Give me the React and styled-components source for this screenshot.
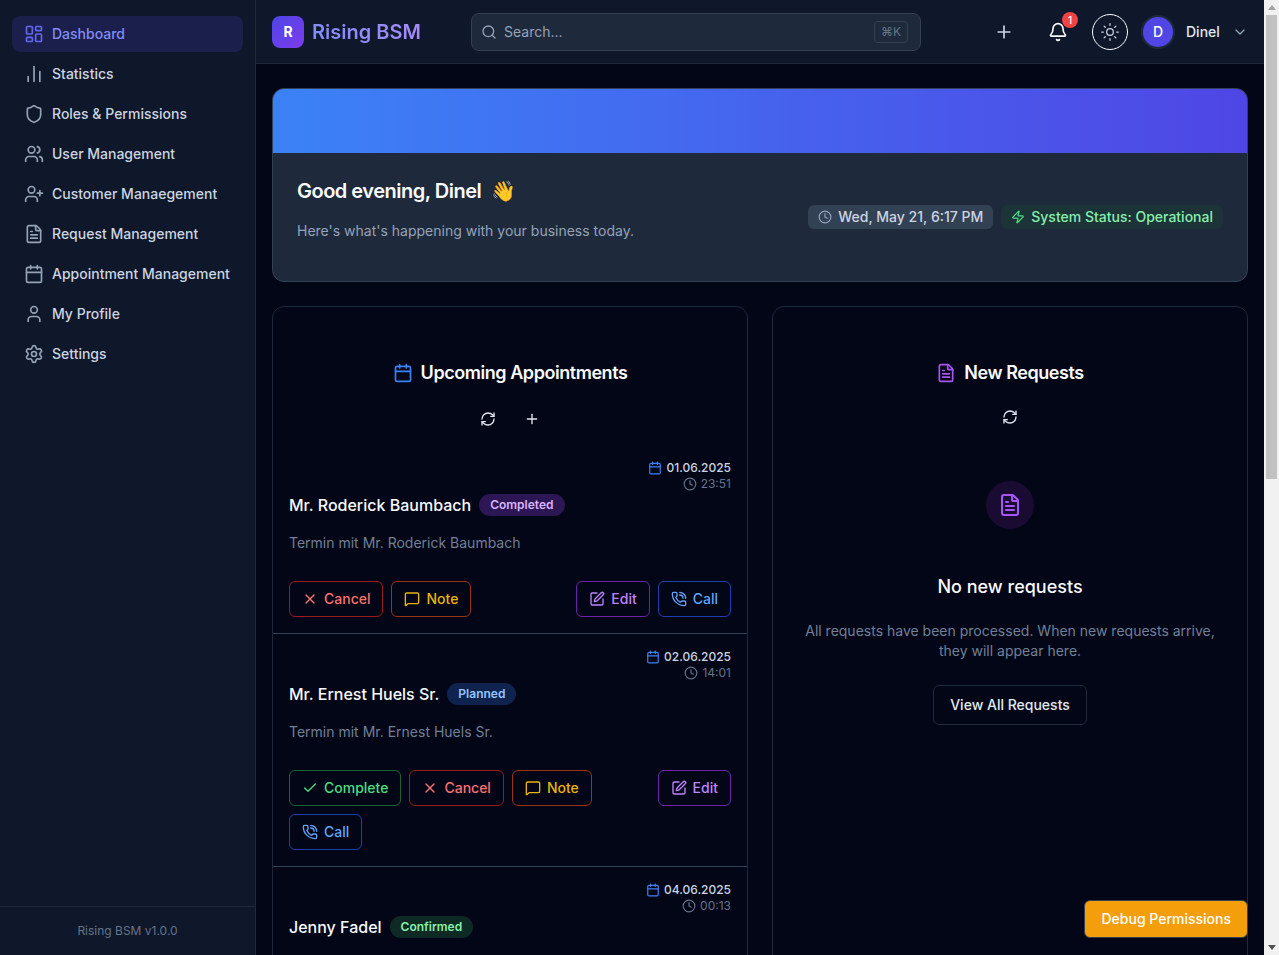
import React from "react";
import styled, { createGlobalStyle } from "styled-components";
import {
  Bell,
  Calendar,
  ChartNoAxesColumn,
  Check,
  ChevronDown,
  Clock,
  FileText,
  LayoutDashboard,
  MessageSquare,
  PhoneCall,
  Plus,
  RefreshCw,
  Search,
  Settings,
  Shield,
  SquarePen,
  Sun,
  User,
  UserPlus,
  Users,
  X,
  Zap,
} from "lucide-react";

const GlobalStyle = createGlobalStyle`
  * { box-sizing: border-box; }
  body {
    margin: 0;
    overflow: hidden;
    background: #020617;
    color: #f8fafc;
    font-family: Inter, "Liberation Sans", sans-serif;
    line-height: 20px;
    -webkit-font-smoothing: antialiased;
  }
`;

const NAV_ITEMS = [
  { label: "Dashboard", icon: LayoutDashboard, active: true },
  { label: "Statistics", icon: ChartNoAxesColumn },
  { label: "Roles & Permissions", icon: Shield },
  { label: "User Management", icon: Users },
  { label: "Customer Manaegement", icon: UserPlus },
  { label: "Request Management", icon: FileText },
  { label: "Appointment Management", icon: Calendar },
  { label: "My Profile", icon: User },
  { label: "Settings", icon: Settings },
];

const ACTIONS = {
  complete: { label: "Complete", icon: Check, color: "#4ade80", border: "#166534" },
  cancel: { label: "Cancel", icon: X, color: "#f87171", border: "#991b1b" },
  note: { label: "Note", icon: MessageSquare, color: "#eab308", border: "#9a3412" },
  edit: { label: "Edit", icon: SquarePen, color: "#c084fc", border: "#6b21a8", push: true },
  call: { label: "Call", icon: PhoneCall, color: "#60a5fa", border: "#1e40af" },
};

const APPOINTMENTS = [
  {
    name: "Mr. Roderick Baumbach",
    status: "Completed",
    date: "01.06.2025",
    time: "23:51",
    actions: ["cancel", "note", "edit", "call"],
  },
  {
    name: "Mr. Ernest Huels Sr.",
    status: "Planned",
    date: "02.06.2025",
    time: "14:01",
    actions: ["complete", "cancel", "note", "edit", "call"],
  },
  {
    name: "Jenny Fadel",
    status: "Confirmed",
    date: "04.06.2025",
    time: "00:13",
    actions: ["complete", "cancel", "note", "edit", "call"],
  },
];

const STATUS_COLORS = {
  Completed: { bg: "#2c1653", fg: "#d8b4fe" },
  Planned: { bg: "#10234f", fg: "#93c5fd" },
  Confirmed: { bg: "#0f2a25", fg: "#86efac" },
};

const App = () => {
  return (
    <>
      <GlobalStyle />
      <Viewport>
        <Scroller>
          <Shell>
            <Sidebar>
              <Nav>
                {NAV_ITEMS.map(({ label, icon: Icon, active }) => (
                  <NavItem key={label} $active={active}>
                    <NavIcon $active={active}>
                      <Icon size={20} />
                    </NavIcon>
                    {label}
                  </NavItem>
                ))}
              </Nav>
              <SidebarFooter>Rising BSM v1.0.0</SidebarFooter>
            </Sidebar>

            <Column>
              <Header>
                <Brand>
                  <LogoMark>R</LogoMark>
                  <BrandName>Rising BSM</BrandName>
                </Brand>
                <SearchBox>
                  <Search size={16} color="#94a3b8" />
                  <SearchText>Search...</SearchText>
                  <Kbd>⌘K</Kbd>
                </SearchBox>
                <HeaderTools>
                  <PlainIcon>
                    <Plus size={20} color="#cbd5e1" />
                  </PlainIcon>
                  <BellWrap>
                    <Bell size={20} color="#f8fafc" />
                    <BellBadge>1</BellBadge>
                  </BellWrap>
                  <ThemeToggle>
                    <Sun size={20} strokeWidth={1.5} color="#cbd5e1" />
                  </ThemeToggle>
                  <UserBox>
                    <Avatar>D</Avatar>
                    <UserName>Dinel</UserName>
                    <ChevronDown size={16} color="#94a3b8" />
                  </UserBox>
                </HeaderTools>
              </Header>

              <Main>
                <Banner>
                  <BannerStripe />
                  <BannerBody>
                    <GreetingBlock>
                      <Greeting>
                        Good evening, Dinel <Wave>👋</Wave>
                      </Greeting>
                      <Subline>Here's what's happening with your business today.</Subline>
                    </GreetingBlock>
                    <Chips>
                      <Chip $bg="#334155" $fg="#cbd5e1">
                        <Clock size={14} color="#94a3b8" />
                        Wed, May 21, 6:17 PM
                      </Chip>
                      <Chip $bg="#1c3338" $fg="#86efac">
                        <Zap size={14} color="#4ade80" />
                        System Status: Operational
                      </Chip>
                    </Chips>
                  </BannerBody>
                </Banner>

                <Cards>
                  <Card>
                    <CardHead>
                      <CardTitle>
                        <Calendar size={20} color="#3b82f6" />
                        Upcoming Appointments
                      </CardTitle>
                      <CardTools>
                        <ToolButton $size={32}>
                          <RefreshCw size={16} />
                        </ToolButton>
                        <ToolButton $size={32}>
                          <Plus size={16} />
                        </ToolButton>
                      </CardTools>
                    </CardHead>
                    <AppointmentList>
                      {APPOINTMENTS.map((item) => (
                        <Appointment key={item.name}>
                          <When>
                            <DateLine>
                              <Calendar size={14} color="#3b82f6" />
                              {item.date}
                            </DateLine>
                            <TimeLine>
                              <Clock size={14} />
                              {item.time}
                            </TimeLine>
                          </When>
                          <NameRow>
                            <Name>{item.name}</Name>
                            <Status $status={item.status}>{item.status}</Status>
                          </NameRow>
                          <Description>Termin mit {item.name}</Description>
                          <Actions>
                            {item.actions.map((key) => {
                              const { label, icon: Icon, color, border, push } = ACTIONS[key];
                              return (
                                <ActionButton key={key} $color={color} $border={border} $push={push}>
                                  <Icon size={16} />
                                  {label}
                                </ActionButton>
                              );
                            })}
                          </Actions>
                        </Appointment>
                      ))}
                    </AppointmentList>
                  </Card>

                  <Card>
                    <CardHead>
                      <CardTitle>
                        <FileText size={20} color="#a855f7" />
                        New Requests
                      </CardTitle>
                      <CardTools>
                        <ToolButton $size={28}>
                          <RefreshCw size={16} />
                        </ToolButton>
                      </CardTools>
                    </CardHead>
                    <Empty>
                      <EmptyBadge>
                        <FileText size={24} color="#a855f7" />
                      </EmptyBadge>
                      <EmptyTitle>No new requests</EmptyTitle>
                      <EmptyText>
                        All requests have been processed. When new requests arrive, they will appear
                        here.
                      </EmptyText>
                      <OutlineButton>View All Requests</OutlineButton>
                    </Empty>
                  </Card>
                </Cards>
              </Main>
            </Column>
          </Shell>
        </Scroller>

        {/* the browser scrollbar of the reference; the headless shot hides the real one */}
        <ScrollStrip>
          <ScrollArrow $dir="up" />
          <ScrollTrack>
            <ScrollThumb />
          </ScrollTrack>
          <ScrollArrow $dir="down" />
        </ScrollStrip>
      </Viewport>
      <DebugButton>Debug Permissions</DebugButton>
    </>
  );
};

export default App;

const Viewport = styled.div`
  display: grid;
  grid-template-columns: minmax(0, 1fr) 15px;
  height: 100vh;
`;

const Scroller = styled.div`
  height: 100vh;
  overflow-y: auto;
`;

const ScrollStrip = styled.div`
  display: flex;
  flex-direction: column;
  background: #f1f1f1;
`;

const ScrollArrow = styled.div`
  flex: none;
  height: 15px;
  display: flex;
  align-items: center;
  justify-content: center;

  &::before {
    content: "";
    border-left: 4px solid transparent;
    border-right: 4px solid transparent;
    border-${(p) => (p.$dir === "up" ? "bottom" : "top")}: 5px solid
      ${(p) => (p.$dir === "up" ? "#a3a3a3" : "#505050")};
  }
`;

const ScrollTrack = styled.div`
  flex: 1;
`;

const ScrollThumb = styled.div`
  height: 464px;
  margin: 0 2px;
  background: #c1c1c1;
`;

const Shell = styled.div`
  display: grid;
  grid-template-columns: 256px minmax(0, 1fr);
  min-height: 1904px;
`;

const Sidebar = styled.aside`
  position: sticky;
  top: 0;
  align-self: start;
  height: 100vh;
  display: flex;
  flex-direction: column;
  background: #0f172a;
  border-right: 1px solid #1e293b;
`;

const Nav = styled.nav`
  flex: 1;
  display: flex;
  flex-direction: column;
  gap: 4px;
  padding: 16px 12px;
`;

const NavItem = styled.a`
  display: flex;
  align-items: center;
  gap: 8px;
  height: 36px;
  padding: 0 12px;
  border-radius: 8px;
  font-size: 14px;
  font-weight: 500;
  white-space: nowrap;
  color: ${(p) => (p.$active ? "#818cf8" : "#cbd5e1")};
  background: ${(p) => (p.$active ? "#1b1f4b" : "transparent")};
`;

const NavIcon = styled.span`
  display: flex;
  color: ${(p) => (p.$active ? "#6366f1" : "#94a3b8")};
`;

const SidebarFooter = styled.div`
  height: 49px;
  display: flex;
  align-items: center;
  justify-content: center;
  border-top: 1px solid #1e293b;
  font-size: 12px;
  color: #64748b;
`;

const Column = styled.div`
  display: flex;
  flex-direction: column;
  min-width: 0;
`;

const Header = styled.header`
  position: sticky;
  top: 0;
  z-index: 5;
  display: flex;
  align-items: center;
  height: 64px;
  padding: 0 16px;
  background: #0f172a;
  border-bottom: 1px solid #1e293b;
`;

const Brand = styled.div`
  display: flex;
  align-items: center;
  gap: 8px;
  width: 199px;
`;

const LogoMark = styled.div`
  width: 32px;
  height: 32px;
  display: flex;
  align-items: center;
  justify-content: center;
  border-radius: 8px;
  background: linear-gradient(135deg, #4f46e5, #7c3aed);
  font-size: 14px;
  font-weight: 700;
  color: #ffffff;
`;

const BrandName = styled.span`
  font-size: 20px;
  line-height: 28px;
  font-weight: 600;
  background: linear-gradient(90deg, #818cf8, #a78bfa);
  -webkit-background-clip: text;
  background-clip: text;
  color: transparent;
`;

const SearchBox = styled.div`
  display: flex;
  align-items: center;
  gap: 7px;
  width: 450px;
  height: 38px;
  padding: 0 12px 0 9px;
  border: 1px solid #334155;
  border-radius: 8px;
  background: #1e293b;
`;

const SearchText = styled.span`
  flex: 1;
  font-size: 14px;
  color: #94a3b8;
`;

const Kbd = styled.span`
  display: flex;
  align-items: center;
  justify-content: center;
  width: 34px;
  height: 22px;
  border: 1px solid #334155;
  border-radius: 4px;
  font-size: 12px;
  color: #64748b;
`;

const HeaderTools = styled.div`
  flex: 1;
  display: flex;
  align-items: center;
  justify-content: flex-end;
`;

const PlainIcon = styled.span`
  display: flex;
  margin-right: 34px;
`;

const BellWrap = styled.span`
  position: relative;
  display: flex;
  margin-right: 24px;
`;

const BellBadge = styled.span`
  position: absolute;
  top: -10px;
  right: -10px;
  width: 16px;
  height: 16px;
  display: flex;
  align-items: center;
  justify-content: center;
  border-radius: 50%;
  background: #ef4444;
  font-size: 10px;
  font-weight: 500;
  color: #ffffff;
`;

const ThemeToggle = styled.span`
  width: 36px;
  height: 36px;
  display: flex;
  align-items: center;
  justify-content: center;
  margin-right: 15px;
  border: 1px solid #f8fafc;
  border-radius: 50%;
`;

const UserBox = styled.div`
  display: flex;
  align-items: center;
  width: 105px;
`;

const Avatar = styled.span`
  width: 30px;
  height: 30px;
  display: flex;
  align-items: center;
  justify-content: center;
  margin-right: 13px;
  border-radius: 50%;
  background: #4f46e5;
  box-shadow: 0 0 0 2px #1e293b;
  font-size: 14px;
  font-weight: 500;
  color: #ffffff;
`;

const UserName = styled.span`
  margin-right: 12px;
  font-size: 14px;
  font-weight: 500;
  color: #e2e8f0;
`;

const Main = styled.main`
  flex: 1;
  display: flex;
  flex-direction: column;
  gap: 24px;
  padding: 24px 16px;
`;

const Banner = styled.section`
  height: 194px;
  border: 1px solid #334155;
  border-radius: 12px;
  overflow: hidden;
  background: #1e293b;
`;

const BannerStripe = styled.div`
  height: 64px;
  background: linear-gradient(90deg, #3b82f6, #4f46e5);
`;

const BannerBody = styled.div`
  height: 128px;
  display: flex;
  align-items: center;
  justify-content: space-between;
  padding: 0 24px;
`;

const GreetingBlock = styled.div`
  padding-bottom: 16px;
`;

const Greeting = styled.h2`
  display: flex;
  align-items: center;
  gap: 10px;
  margin: 0 0 16px;
  font-size: 20px;
  line-height: 28px;
  font-weight: 600;
  letter-spacing: -0.025em;
  color: #f8fafc;
`;

const Wave = styled.span`
  font-family: "Noto Color Emoji", "Noto Sans", sans-serif;
`;

const Subline = styled.p`
  margin: 0;
  font-size: 14px;
  line-height: 20px;
  color: #94a3b8;
`;

const Chips = styled.div`
  display: flex;
  gap: 8px;
`;

const Chip = styled.span`
  display: flex;
  align-items: center;
  gap: 6px;
  height: 24px;
  padding: 0 10px;
  border-radius: 6px;
  background: ${(p) => p.$bg};
  font-size: 14px;
  font-weight: 500;
  color: ${(p) => p.$fg};
`;

const Cards = styled.div`
  display: grid;
  grid-template-columns: 1fr 1fr;
  gap: 24px;
  align-items: stretch;
  flex: 1;
`;

const Card = styled.section`
  border: 1px solid #1e293b;
  border-radius: 12px;
  background: #020617;
`;

const CardHead = styled.div`
  display: flex;
  flex-direction: column;
  align-items: center;
  padding: 52px 16px 0;
`;

const CardTitle = styled.h3`
  display: flex;
  align-items: center;
  gap: 8px;
  margin: 0 0 16px;
  font-size: 18px;
  line-height: 28px;
  font-weight: 600;
  letter-spacing: -0.025em;
  color: #f8fafc;
`;

const CardTools = styled.div`
  display: flex;
  gap: 12px;
`;

const ToolButton = styled.span`
  width: ${(p) => p.$size}px;
  height: ${(p) => p.$size}px;
  display: flex;
  align-items: center;
  justify-content: center;
  color: #e2e8f0;
`;

const AppointmentList = styled.div`
  padding-top: 10px;
`;

const Appointment = styled.article`
  padding: 15px 16px 16px;
  border-bottom: 1px solid #334155;
`;

const When = styled.div`
  display: flex;
  flex-direction: column;
  align-items: flex-end;
  font-size: 12px;
  line-height: 16px;
`;

const DateLine = styled.div`
  display: flex;
  align-items: center;
  gap: 4px;
  font-weight: 500;
  color: #cbd5e1;
`;

const TimeLine = styled(DateLine)`
  font-weight: 400;
  color: #64748b;
`;

const NameRow = styled.div`
  display: flex;
  align-items: center;
  gap: 8px;
  margin-top: 1px;
`;

const Name = styled.div`
  font-size: 16px;
  line-height: 24px;
  font-weight: 500;
  color: #f8fafc;
`;

const Status = styled.span`
  display: flex;
  align-items: center;
  height: 22px;
  padding: 0 11px;
  border-radius: 11px;
  background: ${(p) => STATUS_COLORS[p.$status].bg};
  font-size: 12px;
  font-weight: 600;
  color: ${(p) => STATUS_COLORS[p.$status].fg};
`;

const Description = styled.p`
  margin: 16px 0 28px;
  font-size: 14px;
  line-height: 20px;
  color: #718096;
`;

const Actions = styled.div`
  display: flex;
  flex-wrap: wrap;
  gap: 8px;
`;

const ActionButton = styled.button`
  display: flex;
  align-items: center;
  gap: 6px;
  height: 36px;
  padding: 0 12px;
  margin-left: ${(p) => (p.$push ? "auto" : "0")};
  border: 1px solid ${(p) => p.$border};
  border-radius: 6px;
  background: transparent;
  font-family: inherit;
  font-size: 14px;
  line-height: 20px;
  font-weight: 500;
  color: ${(p) => p.$color};
`;

const Empty = styled.div`
  display: flex;
  flex-direction: column;
  align-items: center;
  padding: 50px 32px 0;
  text-align: center;
`;

const EmptyBadge = styled.div`
  width: 48px;
  height: 48px;
  display: flex;
  align-items: center;
  justify-content: center;
  border-radius: 50%;
  background: #1a0b33;
`;

const EmptyTitle = styled.h4`
  margin: 44px 0 20px;
  font-size: 18px;
  line-height: 28px;
  font-weight: 500;
  color: #f8fafc;
`;

const EmptyText = styled.p`
  margin: 0 0 24px;
  font-size: 14px;
  line-height: 20px;
  color: #718096;
`;

const OutlineButton = styled.button`
  height: 40px;
  padding: 0 16px;
  border: 1px solid #1e293b;
  border-radius: 6px;
  background: #020617;
  font-family: inherit;
  font-size: 14px;
  line-height: 20px;
  font-weight: 500;
  color: #e2e8f0;
`;

const DebugButton = styled.button`
  position: fixed;
  right: 31px;
  bottom: 17px;
  z-index: 10;
  height: 38px;
  padding: 0 16px;
  border: 1px solid #334155;
  border-radius: 6px;
  background: #f59e0b;
  font-family: inherit;
  font-size: 14px;
  line-height: 20px;
  font-weight: 500;
  color: #ffffff;
`;
